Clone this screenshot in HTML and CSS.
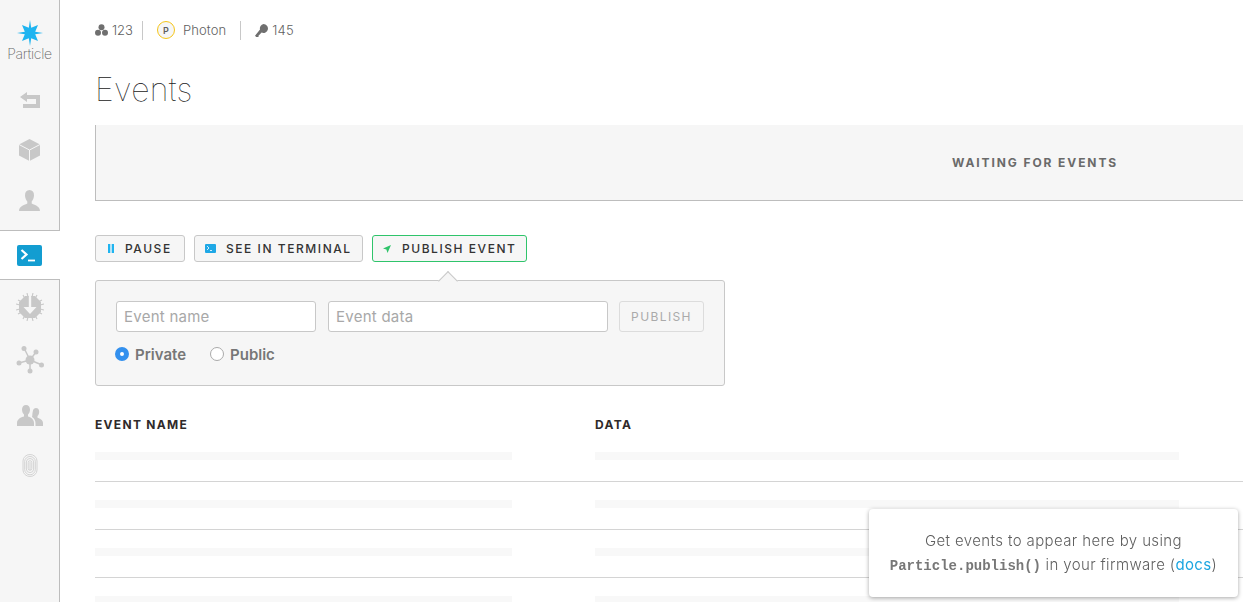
FILE: index.html
```html
<!DOCTYPE html>
<html lang="en">
<head>
<meta charset="utf-8">
<title>Events</title>
<link rel="stylesheet" href="styles.css">
</head>
<body>
<div class="app">
  <nav class="sidebar">
    <div class="side-top">
      <div class="logo">
        <svg class="logo-star" width="26" height="26" viewBox="0 0 26 26"><path fill="#1fb4f0" d="M13 0l1.200 7.700L21 5l-2.800 6.800L26 13l-7.800 1.200L21 21l-6.800-2.800L13 26l-1.200-7.800L5 21l2.800-6.800L0 13l7.800-1.200L5 5l6.800 2.700z"/></svg>
        <span class="logo-text">Particle</span>
      </div>
      <a class="nav-item"><svg width="20" height="16" viewBox="0 0 20 16"><path fill="#c8c8c8" d="M0 5l7-5v3h13v13H3v-4h13V7H7v3z"/></svg></a>
      <a class="nav-item"><svg width="21" height="22" viewBox="0 0 21 22"><path fill="#c8c8c8" d="M10.500 0L21 5.500v11L10.500 22 0 16.500v-11z"/><path d="M0 5.500l10.500 5.500L21 5.500M10.500 11v11" fill="none" stroke="#f6f6f6" stroke-width="1"/></svg></a>
      <a class="nav-item"><svg width="21" height="21" viewBox="0 0 21 21"><path fill="#c8c8c8" d="M10.500 0c3 0 4.500 2.200 4.500 5.200 0 2.500-1 5-2.300 6.300v2c2 1.100 8.300 2.500 8.300 7.500H0c0-5 6.300-6.400 8.300-7.500v-2C7 10.200 6 7.700 6 5.200 6 2.200 7.500 0 10.500 0z"/></svg></a>
    </div>
    <a class="nav-active">
      <svg width="25" height="21" viewBox="0 0 25 21"><rect width="25" height="21" rx="2" fill="#139dd1"/><path d="M4.500 5l5 4.500-5 4.500" fill="none" stroke="#fff" stroke-width="2.200"/><path d="M11 15.500h7" stroke="#fff" stroke-width="1.800"/></svg>
    </a>
    <div class="side-bottom">
      <a class="nav-item"><svg width="28" height="28" viewBox="0 0 28 28"><g stroke="#c8c8c8" stroke-width="1.100"><path d="M7 2l2 4M11 0l1 4M17 0l-1 4M21 2l-2 4M2 7l4 2M0 11l4 1M0 17l4-1M2 21l4-2M26 7l-4 2M28 11l-4 1M28 17l-4-1M26 21l-4-2M7 26l2-4M11 28l1-4M17 28l-1-4M21 26l-2-4"/></g><path fill="#c8c8c8" fill-rule="evenodd" d="M9 3h10l6 6v10l-6 6H9l-6-6V9zM12.800 3v11H7.500l6.500 7 6.500-7h-5.300V3z"/></svg></a>
      <a class="nav-item"><svg width="28" height="28" viewBox="0 0 28 28"><g stroke="#c8c8c8" stroke-width="1.500"><path d="M14 14L8 2M14 14l6-8M14 14L3 17M14 14l12 5M14 14v11"/></g><g fill="#c8c8c8"><circle cx="14" cy="14" r="4.500"/><circle cx="8" cy="2.500" r="2.500"/><circle cx="20" cy="6" r="2.500"/><circle cx="3" cy="17" r="2.500"/><circle cx="25.500" cy="19" r="2.500"/><circle cx="14" cy="25" r="2.500"/></g></svg></a>
      <a class="nav-item nav-people"><svg width="26" height="21" viewBox="0 0 26 21"><path fill="#c8c8c8" d="M9 0c2.500 0 4 2 4 4.500 0 2-.8 4-2 5v2c2.500.8 6 2.500 6 6.500v3H0v-3c0-4 4-5.700 7-6.500v-2c-1.200-1-2-3-2-5C5 2 6.500 0 9 0z"/><path fill="#c8c8c8" d="M19 3c2 0 3.200 1.600 3.200 3.800 0 1.700-.7 3.300-1.700 4.200v1.800c2 .7 5.500 2 5.500 5.200V21h-7.500v-3c0-2.600-1.500-4.700-3.500-6 .4-1 .3-4 .8-5.500C16 4.500 17.200 3 19 3z"/></svg></a>
      <a class="nav-item"><svg width="16" height="23" viewBox="0 0 16 23"><g fill="none" stroke="#cfcfcf" stroke-width=".9"><path d="M1 7a7 6.500 0 0 1 14 0v9a7 6.500 0 0 1-14 0z"/><path d="M2.700 7.500a5.300 5 0 0 1 10.600 0v8a5.300 5.300 0 0 1-10.600 0z"/><path d="M4.400 8a3.600 3.500 0 0 1 7.200 0v7a3.600 3.600 0 0 1-7.200 0z"/><path d="M6.200 8.500a1.800 1.800 0 0 1 3.600 0v6a1.800 1.800 0 0 1-3.600 0z"/><path d="M8 8v8"/></g></svg></a>
    </div>
  </nav>

  <main class="main">
    <div class="meta">
      <span class="meta-item"><svg width="13" height="12" viewBox="0 0 13 12"><g fill="#6f6f6f"><circle cx="6.500" cy="3.300" r="3"/><circle cx="3" cy="8.800" r="3"/><circle cx="10" cy="8.800" r="3"/></g></svg>123</span>
      <span class="meta-item meta-photon"><span class="p-badge">P</span>Photon</span>
      <span class="meta-item meta-key"><svg width="13" height="13" viewBox="0 0 13 13"><path fill="#6f6f6f" d="M8.500 0a4.500 4.500 0 1 1-1.900 8.600L3.500 11.700V13H1.200L0 11.800 5 5.500A4.500 4.500 0 0 1 8.500 0z"/></svg>145</span>
    </div>
    <h1 class="title">Events</h1>
    <div class="banner">WAITING FOR EVENTS</div>
    <div class="actions">
      <button class="btn btn-pause"><svg width="6" height="9" viewBox="0 0 6 9"><path fill="#1fb4f0" d="M0 0h2.300v9H0zM3.700 0H6v9H3.700z"/></svg>PAUSE</button>
      <button class="btn btn-term"><svg width="11" height="9" viewBox="0 0 11 9"><rect width="11" height="9" rx="1" fill="#1fa8e6"/><path d="M2 2l2 2-2 2M5 6.500h2" fill="none" stroke="#fff" stroke-width=".8"/></svg>SEE IN TERMINAL</button>
      <button class="btn btn-publish"><svg width="8" height="8" viewBox="0 0 8 8"><path fill="#2fc46b" d="M8 0L0 3.500l3.400 1L4.500 8z"/></svg>PUBLISH EVENT</button>
    </div>
    <form class="panel">
      <div class="panel-row">
        <input class="field field-name" placeholder="Event name">
        <input class="field field-data" placeholder="Event data">
        <span class="publish">PUBLISH</span>
      </div>
      <div class="radios">
        <span class="radio"><span class="dot dot-on"></span>Private</span>
        <span class="radio"><span class="dot"></span>Public</span>
      </div>
    </form>
    <div class="table-head"><span class="col-a">EVENT NAME</span><span>DATA</span></div>
    <div class="row"><span class="bar bar-a"></span><span class="bar bar-b"></span></div>
    <div class="row"><span class="bar bar-a"></span><span class="bar bar-b"></span></div>
    <div class="row"><span class="bar bar-a"></span><span class="bar bar-b"></span></div>
    <div class="row"><span class="bar bar-a"></span><span class="bar bar-b"></span></div>
  </main>
</div>
<aside class="toast">
  <p>Get events to appear here by using</p>
  <p><code>Particle.publish()</code> in your firmware (<a>docs</a>)</p>
</aside>
</body>
</html>
```

FILE: styles.css
```css
* { box-sizing: border-box; }
html, body { margin: 0; height: 100%; overflow: hidden; }
body { font-family: "Inter", "Liberation Sans", sans-serif; color: #6f6f6f; background: #fff; }
svg { flex: none; }
.app { display: flex; height: 602px; overflow: hidden; }

.sidebar { width: 60px; flex: none; display: flex; flex-direction: column; }
.side-top { height: 231px; background: #f6f6f6; border-right: 1px solid #bdbdbd; border-bottom: 1px solid #bdbdbd; }
.side-bottom { flex: 1; background: #f6f6f6; border-right: 1px solid #bdbdbd; border-top: 1px solid #bdbdbd; }
.nav-active { height: 48px; padding-right: 1px; display: flex; align-items: center; justify-content: center; }
.nav-item { height: 50px; display: flex; align-items: center; justify-content: center; }
.side-bottom .nav-item { height: 53px; }
.side-bottom .nav-people { padding-top: 5px; }
.logo { height: 75px; padding-top: 20px; display: flex; flex-direction: column; align-items: center; }
.logo-star { display: block; }
.logo-text { font-weight: 200; font-size: 14px; line-height: 16px; letter-spacing: -.3px; color: #666; }

.main { flex: 1; min-width: 0; padding-left: 35px; overflow: hidden; }
.meta { height: 60px; display: flex; align-items: center; font-size: 13px; font-weight: 300; color: #5f5f5f; }
.meta-item { display: flex; align-items: center; gap: 4px; height: 19px; }
.meta-photon { margin-left: 9px; padding: 0 14px; gap: 8px; border-left: 1px solid #c8c8c8; border-right: 1px solid #c8c8c8; letter-spacing: .1px; }
.meta-key { margin-left: 14px; gap: 4px; letter-spacing: .2px; }
.p-badge { width: 18px; height: 18px; border: 1px solid #f5c518; border-radius: 50%; display: flex; align-items: center; justify-content: center; font-size: 9px; font-weight: 600; background: #f6f6f6; }
.title { margin: 0; height: 65px; padding-top: 11px; font-weight: 100; font-size: 32px; line-height: 38px; letter-spacing: .35px; color: #222; }

.banner { height: 76px; background: #f6f6f6; border-left: 1px solid #bdbdbd; border-bottom: 1px solid #bdbdbd; padding: 30px 0 0 856px; font-size: 12px; line-height: 16px; font-weight: 700; letter-spacing: 1.900px; color: #6a6a6a; white-space: nowrap; }

.actions { display: flex; gap: 9px; margin-top: 34px; }
.btn { height: 27px; display: flex; align-items: center; padding: 0 0 0 12px; background: #f6f6f6; border: 1px solid #c8c8c8; border-radius: 3px; font: 500 12px "Inter", sans-serif; letter-spacing: 1.550px; color: #333; white-space: nowrap; }
.btn-pause { gap: 11px; width: 90px; }
.btn-term { gap: 10px; width: 169px; padding-left: 10px; }
.btn-publish { gap: 11px; width: 155px; padding-left: 10px; border-color: #2fc46b; }

.panel { position: relative; width: 630px; height: 106px; margin-top: 18px; padding: 20px 20px 0; background: #f6f6f6; border: 1px solid #c8c8c8; border-radius: 3px; }
.panel::before { content: ""; position: absolute; left: 345px; top: -7px; width: 13px; height: 13px; background: #f6f6f6; border-top: 1px solid #c8c8c8; border-left: 1px solid #c8c8c8; transform: rotate(45deg); }
.panel-row { display: flex; }
.field { height: 31px; padding: 0 7px 1px; border: 1px solid #c8c8c8; border-radius: 3px; background: #fff; font: 400 15px "Inter", sans-serif; letter-spacing: .25px; }
.field::placeholder { color: #a8a8a8; opacity: 1; }
.field-name { width: 200px; }
.field-data { width: 280px; margin-left: 12px; }
.publish { width: 85px; height: 31px; margin-left: 11px; display: flex; align-items: center; justify-content: center; border: 1px solid #dcdcdc; border-radius: 3px; font-size: 12px; font-weight: 400; letter-spacing: 1.400px; color: #aaa; }
.radios { display: flex; margin-top: 13px; margin-left: -1px; gap: 24px; }
.radio { display: flex; align-items: center; gap: 6px; height: 18px; font-size: 15px; font-weight: 600; color: #777; }
.dot { width: 14px; height: 14px; border-radius: 50%; border: 1px solid #aaa; background: #fff; }
.dot-on { border: 5px solid #3390ee; }

.table-head { height: 17px; margin-top: 31px; display: flex; font-size: 12px; line-height: 16px; font-weight: 700; letter-spacing: 1.300px; color: #2f2a2a; }
.col-a { width: 500px; }
.row { display: flex; height: 48px; padding-top: 18px; border-bottom: 1px solid #d4d4d4; }
.bar { height: 8px; background: #f8f8f8; }
.bar-a { width: 417px; }
.bar-b { width: 584px; margin-left: 83px; }

.toast { position: fixed; left: 869px; top: 509px; width: 369px; height: 88px; padding-top: 20px; background: #fff; border-radius: 4px; box-shadow: 0 1px 4px rgba(0,0,0,.35); text-align: center; font-size: 15px; font-weight: 300; line-height: 24px; letter-spacing: .38px; color: #5f5f5f; }
.toast p { margin: 0; }
.toast code { font: 700 14px "Liberation Mono", monospace; letter-spacing: 0; color: #777; }
.toast a { color: #1ba5e0; font-weight: 400; }
```
